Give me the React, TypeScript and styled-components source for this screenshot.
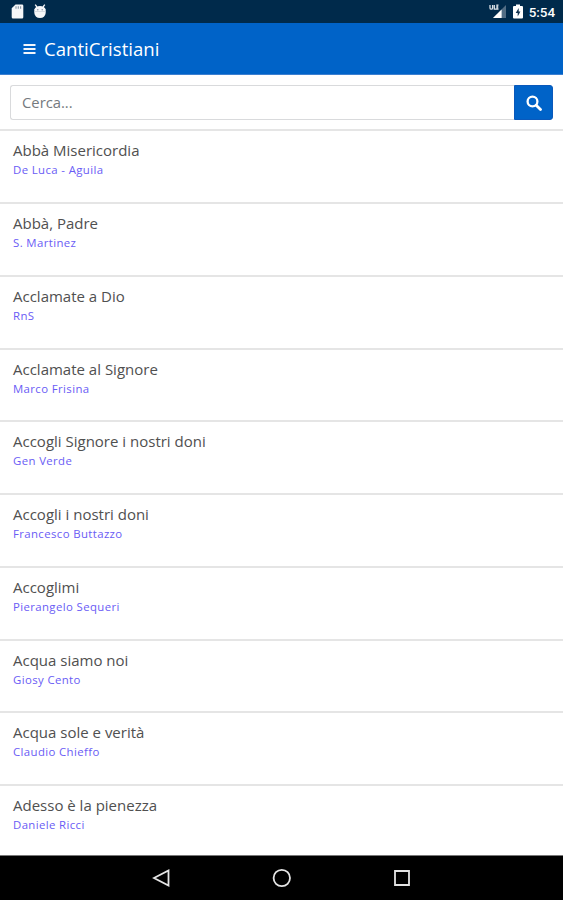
import React from "react";
import styled, { createGlobalStyle } from "styled-components";

const GlobalStyle = createGlobalStyle`
  * { box-sizing: border-box; }
  body { margin: 0; background: #fff; font-family: "Open Sans", sans-serif; }
`;

const Screen = styled.div`
  width: 563px;
  height: 900px;
  display: flex;
  flex-direction: column;
  overflow: hidden;
  background: #fff;
`;

const StatusBar = styled.div`
  flex: none;
  height: 23px;
  padding: 0 8px 0 11px;
  display: flex;
  align-items: center;
  justify-content: space-between;
  background: #002a4b;
  color: #fff;
`;

const StatusGroup = styled.div<{ $gap: number }>`
  display: flex;
  align-items: center;
  gap: ${(p) => p.$gap}px;
`;

const Clock = styled.span`
  font: 500 13.4px/23px Roboto, sans-serif;
  padding-top: 1px;
`;

const Header = styled.header`
  flex: none;
  height: 52px;
  padding: 0 23px;
  display: flex;
  align-items: center;
  gap: 8px;
  background: #0063c8;
  border-bottom: 1px solid #3c7fd0;
  color: #fff;
`;

const AppTitle = styled.h1`
  margin: 0;
  font-size: 18.6px;
  font-weight: 400;
  line-height: 50px;
`;

const SearchBar = styled.form`
  flex: none;
  height: 54.4px;
  margin: 0;
  padding: 10px 10px 9px;
  display: flex;
`;

const SearchInput = styled.input`
  flex: 1;
  min-width: 0;
  height: 35px;
  padding: 0 11px 1px;
  border: 1px solid #d9dadc;
  border-right: 0;
  border-radius: 3px 0 0 3px;
  outline: none;
  font: 400 14.8px "Open Sans", sans-serif;
  &::placeholder { color: #757a7e; opacity: 1; }
`;

const SearchButton = styled.button`
  width: 39px;
  height: 35px;
  padding: 0;
  display: flex;
  align-items: center;
  justify-content: center;
  border: 1px solid #0a59bb;
  border-radius: 0 3px 3px 0;
  background: #0063c8;
`;

const SongList = styled.ul`
  flex: 1;
  min-height: 0;
  margin: 0;
  padding: 0;
  display: grid;
  grid-template-rows: repeat(10, 72.75px);
  list-style: none;
  overflow: hidden;
`;

const SongItem = styled.li`
  padding: 8px 13px 0;
  border-top: 2px solid #e5e5e5;
`;

const SongTitle = styled.div`
  font-size: 15px;
  line-height: 22px;
  color: #505050;
`;

const SongAuthor = styled.div`
  font-size: 11.4px;
  letter-spacing: 0.38px;
  line-height: 18px;
  color: #6a5cf5;
`;

const NavBar = styled.nav`
  flex: none;
  height: 45px;
  padding: 0 151px 0 151px;
  display: flex;
  align-items: center;
  justify-content: space-between;
  border-top: 1px solid #777;
  background: #000;
`;

const songs = [
  ["Abbà Misericordia", "De Luca - Aguila"],
  ["Abbà, Padre", "S. Martinez"],
  ["Acclamate a Dio", "RnS"],
  ["Acclamate al Signore", "Marco Frisina"],
  ["Accogli Signore i nostri doni", "Gen Verde"],
  ["Accogli i nostri doni", "Francesco Buttazzo"],
  ["Accoglimi", "Pierangelo Sequeri"],
  ["Acqua siamo noi", "Giosy Cento"],
  ["Acqua sole e verità", "Claudio Chieffo"],
  ["Adesso è la pienezza", "Daniele Ricci"],
];

const SdCardIcon = () => (
  <svg width="13" height="15" viewBox="0 0 13 15">
    <path d="M4.5 .5H11Q12.3 .5 12.3 1.8V13Q12.3 14.5 11 14.5H2Q.7 14.5 .7 13V4.3Z" fill="#f5f7f9" />
    <path d="M5 2.3v2.4M7.3 2.3v2.4M9.6 2.3v2.4" stroke="#8796a5" strokeWidth="1.1" />
  </svg>
);

const RobotIcon = () => (
  <svg width="14" height="15" viewBox="0 0 14 15">
    <path d="M2.2 .7 4 3M11.8 .7 10 3" stroke="#f5f7f9" strokeWidth="1.3" />
    <path d="M1.3 7V5.5Q2.5 2 7 2T12.7 5.5V9Q12 14 7 14T1.3 9Z" fill="#f5f7f9" />
    <circle cx="4.8" cy="5.7" r=".7" fill="#8391a0" />
    <circle cx="9.2" cy="5.7" r=".7" fill="#8391a0" />
    <path d="M1 7.5H13" stroke="#c1c9d1" strokeWidth=".6" />
  </svg>
);

const SignalIcon = () => (
  <svg width="18" height="15" viewBox="0 0 18 15">
    <path d="M17 1V14H4Z" fill="#526d84" />
    <path d="M12.6 5.4V14H4Z" fill="#fff" />
    <path d="M1 1V4Q1 5.2 2.3 5.2T3.6 4V1M5.3 1V5.2H7.4M9.5 1.2H8V5H9.5M8 3H9.3" stroke="#d9e0e6" strokeWidth="1.3" fill="none" />
  </svg>
);

const BatteryIcon = () => (
  <svg width="10" height="15" viewBox="0 0 10 15">
    <path d="M3 .5H7V2H9Q10 2 10 3V13.5Q10 14.5 9 14.5H1Q0 14.5 0 13.5V3Q0 2 1 2H3Z" fill="#fff" />
    <path d="M5.7 4 2.7 9H4.7V12.5L7.4 7.5H5.7Z" fill="#12324e" />
  </svg>
);

const MenuIcon = () => (
  <svg width="13" height="12" viewBox="0 0 13 12">
    <path d="M.5 2H12.5M.5 6H12.5M.5 10H12.5" stroke="#f2f6fc" strokeWidth="1.8" />
  </svg>
);

const SearchIcon = () => (
  <svg width="16" height="16" viewBox="0 0 16 16" fill="none" stroke="#fff">
    <circle cx="6.5" cy="6.5" r="4.9" strokeWidth="2.3" />
    <path d="M10.2 10.2 14.5 14.5" strokeWidth="2.8" strokeLinecap="round" />
  </svg>
);

const NavIcon = ({ children }: { children: React.ReactNode }) => (
  <svg width="20" height="20" viewBox="0 0 20 20" fill="none" stroke="#e4e4e4" strokeWidth="1.8">
    {children}
  </svg>
);

export default function App() {
  return (
    <Screen>
      <GlobalStyle />
      <StatusBar>
        <StatusGroup $gap={9}>
          <SdCardIcon />
          <RobotIcon />
        </StatusGroup>
        <StatusGroup $gap={6}>
          <SignalIcon />
          <BatteryIcon />
          <Clock>5:54</Clock>
        </StatusGroup>
      </StatusBar>
      <Header>
        <MenuIcon />
        <AppTitle>CantiCristiani</AppTitle>
      </Header>
      <SearchBar>
        <SearchInput placeholder="Cerca..." />
        <SearchButton type="button" aria-label="Cerca">
          <SearchIcon />
        </SearchButton>
      </SearchBar>
      <SongList>
        {songs.map(([title, author]) => (
          <SongItem key={title}>
            <SongTitle>{title}</SongTitle>
            <SongAuthor>{author}</SongAuthor>
          </SongItem>
        ))}
      </SongList>
      <NavBar>
        <NavIcon><path d="M3 10 17.5 2.4V17.6Z" /></NavIcon>
        <NavIcon><circle cx="9.8" cy="10" r="8.2" /></NavIcon>
        <NavIcon><path d="M3 3H17V17H3Z" /></NavIcon>
      </NavBar>
    </Screen>
  );
}
